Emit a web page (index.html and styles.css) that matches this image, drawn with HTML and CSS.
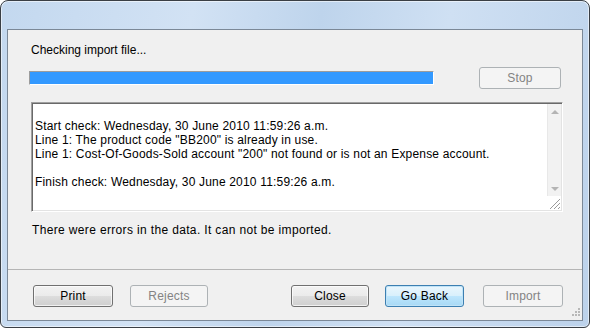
FILE: index.html
```html
<!DOCTYPE html>
<html lang="en">
<head>
    <meta charset="utf-8">
    <title>Import</title>
    <link rel="stylesheet" href="styles.css">
</head>
<body>
    <div class="window">
        <div class="client">
            <div class="main">
                <p class="status">Checking import file...</p>
                <div class="progress-row">
                    <div class="progress"><div class="progress-fill"></div></div>
                    <button type="button" class="btn stop" disabled>Stop</button>
                </div>
                <!-- log box -->
                <div class="log">
                    <div class="log-text">
                        <p>&nbsp;</p>
                        <p>Start check: Wednesday, 30 June 2010 11:59:26 a.m.</p>
                        <p>Line 1: The product code "BB200" is already in use.</p>
                        <p>Line 1: Cost-Of-Goods-Sold account "200" not found or is not an Expense account.</p>
                        <p>&nbsp;</p>
                        <p>Finish check: Wednesday, 30 June 2010 11:59:26 a.m.</p>
                    </div>
                    <div class="scroll">
                        <div class="scroll-bar">
                            <span class="arrow up"></span>
                            <span class="arrow down"></span>
                        </div>
                        <div class="grip">
                            <svg width="12" height="12" viewBox="0 0 12 12">
                                <path d="M11 1 L1 11 M11 5 L5 11 M11 9 L9 11" stroke="#9a9a9a" stroke-width="1"/>
                                <path d="M12 2 L2 12 M12 6 L6 12 M12 10 L10 12" stroke="#ffffff" stroke-width="1"/>
                            </svg>
                        </div>
                    </div>
                </div>
                <p class="message">There were errors in the data. It can not be imported.</p>
            </div>
            <div class="footer">
                <button type="button" class="btn print">Print</button>
                <button type="button" class="btn rejects" disabled>Rejects</button>
                <button type="button" class="btn close">Close</button>
                <button type="button" class="btn goback default">Go Back</button>
                <button type="button" class="btn import" disabled>Import</button>
                <svg class="size-grip" width="10" height="10" viewBox="0 0 10 10">
                    <rect x="8" y="0" width="2" height="2" fill="#b8b8b8"/>
                    <rect x="5" y="3" width="2" height="2" fill="#b8b8b8"/>
                    <rect x="8" y="3" width="2" height="2" fill="#b8b8b8"/>
                    <rect x="2" y="6" width="2" height="2" fill="#b8b8b8"/>
                    <rect x="5" y="6" width="2" height="2" fill="#b8b8b8"/>
                    <rect x="8" y="6" width="2" height="2" fill="#b8b8b8"/>
                </svg>
            </div>
        </div>
    </div>
</body>
</html>
```

FILE: styles.css
```css
* {
    margin: 0;
    padding: 0;
    box-sizing: border-box;
}
body {
    width: 590px;
    height: 328px;
    background: #fff;
    font-family: "Liberation Sans", Arial, sans-serif;
    font-size: 12px;
    letter-spacing: 0.18px;
    color: #000;
    overflow: hidden;
}
.window {
    width: 590px;
    height: 328px;
    border: 1px solid #3a3f45;
    border-radius: 8px 8px 6px 6px;
    padding: 28px 6px 6px 6px;
    background: linear-gradient(100deg, #c3d8ef 0%, #d2e2f4 30%, #bed4ec 50%, #cfe0f3 70%, #bcd2eb 100%);
    box-shadow: inset 0 0 0 1px rgba(255, 255, 255, 0.55);
}
.client {
    height: 292px;
    border: 1px solid #7b8897;
    background: #f0f0f0;
    display: flex;
    flex-direction: column;
}
.main {
    padding: 13px 21px 0 21px;
    height: 239px;
}
.status {
    line-height: 14px;
    padding-left: 2px;
    letter-spacing: 0;
}
.progress-row {
    display: flex;
    align-items: center;
    height: 21px;
    margin-top: 10px;
}
.progress {
    width: 405px;
    height: 14px;
    border: 1px solid;
    border-color: #9c9c9c #fff #fff #9c9c9c;
    background: #3399ff;
}
.progress-fill {
    height: 100%;
}
.stop {
    margin-left: auto;
    width: 82px;
    height: 21px;
}
.log {
    margin: 14px -2px 0 2px;
    height: 110px;
    border: 1px solid;
    border-color: #a0a0a0 #fff #fff #a0a0a0;
    box-shadow: inset 1px 1px 0 #696969, inset -1px -1px 0 #e3e3e3;
    background: #fff;
    display: flex;
    padding: 1px;
}
.log-text {
    flex: 1;
    padding: 1px 0 0 2px;
    line-height: 14px;
    white-space: nowrap;
    overflow: hidden;
}
.scroll {
    width: 14px;
    display: flex;
    flex-direction: column;
}
.scroll-bar {
    flex: 1;
    background: #f2f2f2;
    border-left: 1px solid #e8e8e8;
    display: flex;
    flex-direction: column;
    justify-content: space-between;
    align-items: center;
    padding: 6px 0 5px;
}
.arrow {
    width: 0;
    height: 0;
    border-left: 4px solid transparent;
    border-right: 4px solid transparent;
}
.arrow.up {
    border-bottom: 4px solid #b4b4b4;
}
.arrow.down {
    border-top: 4px solid #b4b4b4;
}
.grip {
    height: 14px;
    background: #fff;
    display: flex;
    align-items: flex-end;
    justify-content: flex-end;
}
.message {
    margin-top: 11px;
    line-height: 14px;
    padding-left: 3px;
    letter-spacing: 0.35px;
}
.footer {
    flex: 1;
    border-top: 1px solid #b5b5b5;
    display: flex;
    align-items: flex-start;
    padding: 15px 19px 0 25px;
    position: relative;
}
.btn {
    height: 22px;
    font-family: "Liberation Sans", Arial, sans-serif;
    font-size: 12px;
    letter-spacing: 0.18px;
    color: #000;
    border: 1px solid #707070;
    border-radius: 3px;
    background: linear-gradient(#f2f2f2 0%, #ebebeb 48%, #dddddd 50%, #cfcfcf 100%);
    box-shadow: inset 0 0 0 1px rgba(255, 255, 255, 0.7);
}
.btn:disabled {
    color: #838383;
    border-color: #adb2b5;
    background: #f4f4f4;
    box-shadow: none;
}
.btn.default {
    border-color: #3c7fb1;
    background: linear-gradient(#eaf6fd 0%, #d9f0fc 48%, #bee6fd 50%, #a7d9f5 100%);
    box-shadow: inset 0 0 0 1px #c0e3f7;
}
.print {
    width: 80px;
}
.rejects {
    width: 78px;
    margin-left: 17px;
}
.close {
    width: 78px;
    margin-left: auto;
}
.goback {
    width: 79px;
    margin-left: 16px;
}
.import {
    width: 80px;
    margin-left: 19px;
}
.size-grip {
    position: absolute;
    right: 2px;
    bottom: 2px;
}
```
